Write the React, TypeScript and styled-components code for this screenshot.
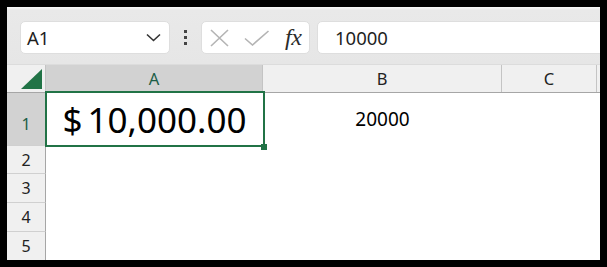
import React from "react"
import styled, { createGlobalStyle } from "styled-components"

const GlobalStyle = createGlobalStyle`
  html, body {
    margin: 0;
    padding: 0;
    background: #000;
  }
  body {
    font-family: "Noto Sans", "Liberation Sans", sans-serif;
    color: #1f1f1f;
  }
`

const Frame = styled.div`
  width: 607px;
  height: 267px;
  box-sizing: border-box;
  padding: 7px;
  background: #000;
`

const Window = styled.div`
  height: 100%;
  background: #fff;
  display: flex;
  flex-direction: column;
  overflow: hidden;
`

const Toolbar = styled.div`
  height: 58px;
  flex: none;
  box-sizing: border-box;
  padding: 14px 0 0 13px;
  display: flex;
  align-items: flex-start;
  background: linear-gradient(#fafafa 0, #e9e9e9 3px, #e6e6e6 100%);
  border-bottom: 1px solid #dcdcdc;
`

const Field = styled.div<{ $width?: number }>`
  height: 33px;
  box-sizing: border-box;
  background: #fff;
  border: 1px solid #dedede;
  border-radius: 5px;
  display: flex;
  align-items: center;
  flex: ${(p) => (p.$width ? `0 0 ${p.$width}px` : "1 0 auto")};
`

const NameBox = styled(Field)`
  padding: 0 8px 0 6px;
  justify-content: space-between;
  font-size: 18.5px;
`

const FormulaButtons = styled(Field)`
  padding: 0 0 0 8px;
  gap: 15px;
`

const FormulaInput = styled(Field)`
  padding-left: 17px;
  margin-left: 7px;
  margin-right: -12px;
  font-size: 18.5px;
`

const Grip = styled.div`
  width: 31px;
  height: 33px;
  display: flex;
  flex-direction: column;
  align-items: center;
  justify-content: center;
  gap: 3px;
`

const GripDot = styled.span`
  width: 3px;
  height: 3px;
  background: #444;
`

const IconSlot = styled.span<{ $width: number }>`
  width: ${(p) => p.$width}px;
  display: flex;
  align-items: center;
  justify-content: center;
`

const Fx = styled.span`
  font-family: "Liberation Serif", "DejaVu Serif", serif;
  font-style: italic;
  font-size: 24px;
  color: #2b2b2b;
  letter-spacing: -0.5px;
  line-height: 1;
  margin-top: -2px;
`

const Sheet = styled.div`
  flex: 1;
  display: flex;
  flex-direction: column;
`

const GridRow = styled.div<{ $height: number; $header?: boolean }>`
  display: grid;
  grid-template-columns: 39px 217px 239px 95px 1fr;
  height: ${(p) => p.$height}px;
  flex: none;
  box-sizing: border-box;
  ${(p) =>
    p.$header &&
    `
    background: #f0f0f0;
    border-bottom: 1px solid #a6a6a6;
  `}
`

const ColumnHead = styled.div<{ $selected?: boolean; $last?: boolean }>`
  display: flex;
  align-items: center;
  justify-content: center;
  font-size: 16.5px;
  color: ${(p) => (p.$selected ? "#1d5e47" : "#222")};
  background: ${(p) => (p.$selected ? "#d2d2d2" : "transparent")};
  border-right: ${(p) => (p.$last ? "none" : "1px solid #c4c4c4")};
`

const Corner = styled.div`
  position: relative;
  border-right: 1px solid #c4c4c4;
  display: flex;
  align-items: flex-end;
  justify-content: flex-end;
  padding: 0 3px 3px 0;
`

const RowHead = styled.div<{ $selected?: boolean }>`
  display: flex;
  align-items: center;
  justify-content: center;
  font-size: 16px;
  padding-top: ${(p) => (p.$selected ? "10px" : "0")};
  box-sizing: border-box;
  color: ${(p) => (p.$selected ? "#1d5e47" : "#222")};
  background: ${(p) => (p.$selected ? "#d2d2d2" : "#f0f0f0")};
  border-right: 1px solid #a6a6a6;
  border-bottom: 1px solid #d0d0d0;
`

const Cell = styled.div<{ $active?: boolean; $size?: number }>`
  position: relative;
  display: flex;
  align-items: center;
  justify-content: center;
  font-size: ${(p) => p.$size ?? 19}px;
  color: #000;
  line-height: 1;
  ${(p) =>
    p.$active &&
    `
    &::after {
      content: "";
      position: absolute;
      inset: -2px -2px -1px -1px;
      border: 2px solid #217346;
    }
  `}
`

const FillHandle = styled.span`
  position: absolute;
  right: -4px;
  bottom: -4px;
  width: 6px;
  height: 6px;
  background: #217346;
  z-index: 1;
`

const Currency = styled.span`
  margin-right: 5px;
`

const CheckIcon = () => (
  <svg width="26" height="16" viewBox="0 0 26 16">
    <path d="M1 8.5 L8.5 15 L24.5 1" fill="none" stroke="#b4b4b4" strokeWidth="1.6" />
  </svg>
)

const CrossIcon = () => (
  <svg width="19" height="18" viewBox="0 0 19 18">
    <path d="M1 1 L18 17 M18 1 L1 17" fill="none" stroke="#b4b4b4" strokeWidth="1.6" />
  </svg>
)

const Chevron = () => (
  <svg width="15" height="9" viewBox="0 0 15 9">
    <path d="M1 1.5 L7.5 7.5 L14 1.5" fill="none" stroke="#333" strokeWidth="1.6" />
  </svg>
)

const SelectAll = () => (
  <svg width="21" height="20" viewBox="0 0 21 20">
    <path d="M21 0 L21 20 L0 20 Z" fill="#217346" />
  </svg>
)

const rows = [
  { n: 2, h: 28 },
  { n: 3, h: 29 },
  { n: 4, h: 29 },
  { n: 5, h: 29 },
]

export default function App() {
  return (
    <>
      <GlobalStyle />
      <Frame>
        <Window>
          <Toolbar>
            <NameBox $width={150}>
              <span>A1</span>
              <Chevron />
            </NameBox>
            <Grip>
              <GripDot />
              <GripDot />
              <GripDot />
            </Grip>
            <FormulaButtons $width={109}>
              <IconSlot $width={19}>
                <CrossIcon />
              </IconSlot>
              <IconSlot $width={26}>
                <CheckIcon />
              </IconSlot>
              <Fx>fx</Fx>
            </FormulaButtons>
            <FormulaInput>10000</FormulaInput>
          </Toolbar>
          <Sheet>
            <GridRow $header $height={28}>
              <Corner>
                <SelectAll />
              </Corner>
              <ColumnHead $selected>A</ColumnHead>
              <ColumnHead>B</ColumnHead>
              <ColumnHead>C</ColumnHead>
              <ColumnHead $last />
            </GridRow>
            <GridRow $height={53}>
              <RowHead $selected>1</RowHead>
              <Cell $active $size={35}>
                <Currency>$</Currency>
                <span>10,000.00</span>
                <FillHandle />
              </Cell>
              <Cell>20000</Cell>
              <Cell />
              <Cell />
            </GridRow>
            {rows.map((r) => (
              <GridRow key={r.n} $height={r.h}>
                <RowHead>{r.n}</RowHead>
                <Cell />
                <Cell />
                <Cell />
                <Cell />
              </GridRow>
            ))}
          </Sheet>
        </Window>
      </Frame>
    </>
  )
}
